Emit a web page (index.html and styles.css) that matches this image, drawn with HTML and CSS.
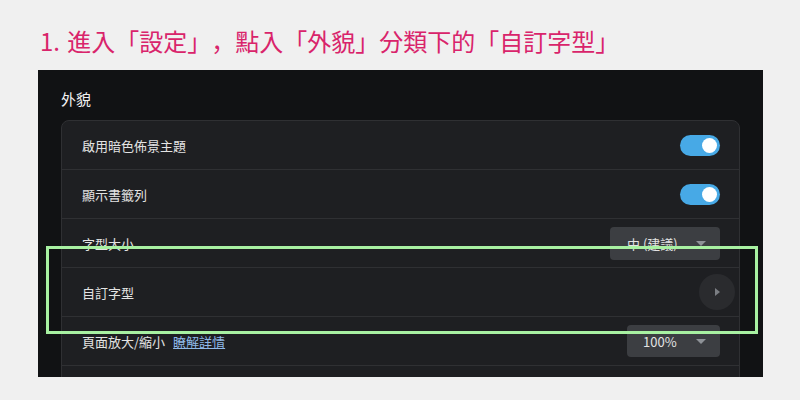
FILE: index.html
```html
<!DOCTYPE html>
<html lang="zh-Hant">
<head>
<meta charset="utf-8">
<title>設定</title>
<link rel="stylesheet" href="styles.css">
</head>
<body>
<div class="page">
  <h1 class="title">1. 進入「設定」，點入「外貌」分類下的「自訂字型」</h1>
  <div class="panel">
    <h2 class="heading">外貌</h2>
    <div class="card">
      <div class="row">
        <span class="label">啟用暗色佈景主題</span>
        <span class="toggle"><span class="knob"></span></span>
      </div>
      <div class="row">
        <span class="label">顯示書籤列</span>
        <span class="toggle"><span class="knob"></span></span>
      </div>
      <div class="row">
        <span class="label">字型大小</span>
        <span class="select select-wide"><span>中 (建議)</span><span class="caret"></span></span>
      </div>
      <div class="row">
        <span class="label">自訂字型</span>
        <span class="icon-btn"><span class="arrow"></span></span>
      </div>
      <div class="row">
        <span class="label">頁面放大/縮小<a class="link">瞭解詳情</a></span>
        <span class="select select-narrow"><span>100%</span><span class="caret"></span></span>
      </div>
      <div class="row"></div>
    </div>
  </div>
  <div class="highlight"></div>
</div>
</body>
</html>
```

FILE: styles.css
```css
html, body {
  margin: 0;
  padding: 0;
  background: #f0f0f0;
}
body {
  font-family: "Noto Sans CJK TC", "Noto Sans", sans-serif;
}
.page {
  position: relative;
  width: 800px;
  height: 400px;
  overflow: hidden;
}
.title {
  margin: 0;
  padding: 25px 0 0 40px;
  height: 45px;
  line-height: 32px;
  font-family: "Noto Sans CJK JP", "Noto Sans CJK TC", sans-serif;
  font-feature-settings: "locl" 0;
  font-size: 24px;
  font-weight: 400;
  color: #d9246b;
  text-spacing-trim: space-all;
  word-spacing: 2px;
}
.panel {
  margin-left: 38px;
  width: 725px;
  height: 307px;
  box-sizing: border-box;
  padding: 0 23px;
  background: #111214;
  overflow: hidden;
}
.heading {
  margin: 0;
  padding-top: 18px;
  height: 32px;
  line-height: 22px;
  font-size: 15px;
  font-weight: 400;
  color: #f1f1f1;
}
.card {
  border: 1px solid #2f3033;
  border-radius: 8px;
  background: #1e1f22;
}
.row {
  height: 48px;
  display: flex;
  align-items: center;
  justify-content: space-between;
  padding: 0 19px 0 20px;
  font-size: 13px;
  color: #e3e3e3;
}
.row + .row {
  border-top: 1px solid #2f3033;
}
.label {
  display: flex;
  align-items: center;
  gap: 8px;
}
.link {
  color: #8fb8e8;
  text-decoration: underline;
}
.toggle {
  width: 40px;
  height: 21px;
  border-radius: 11px;
  background: #47a9e6;
  display: flex;
  align-items: center;
  justify-content: flex-end;
  padding-right: 3px;
  box-sizing: border-box;
}
.knob {
  width: 15px;
  height: 15px;
  border-radius: 50%;
  background: #ffffff;
}
.select {
  height: 33px;
  border-radius: 4px;
  background: #3c3e42;
  display: flex;
  align-items: center;
  justify-content: space-between;
  box-sizing: border-box;
  color: #e3e3e3;
  font-size: 13px;
}
.select-wide {
  width: 110px;
  padding: 0 14px 0 17px;
}
.select-narrow {
  width: 93px;
  height: 32px;
  padding: 0 14px 0 16px;
}
.caret {
  width: 0;
  height: 0;
  border-left: 5px solid transparent;
  border-right: 5px solid transparent;
  border-top: 5px solid #8e9297;
}
.icon-btn {
  width: 36px;
  height: 36px;
  border-radius: 50%;
  background: #2a2b2e;
  margin-right: -15px;
  display: flex;
  align-items: center;
  justify-content: center;
}
.arrow {
  width: 0;
  height: 0;
  border-top: 4px solid transparent;
  border-bottom: 4px solid transparent;
  border-left: 5px solid #7b7e83;
}
.highlight {
  position: absolute;
  left: 46px;
  top: 246px;
  width: 706px;
  height: 82px;
  border: 3px solid #a8f1a2;
}
```
